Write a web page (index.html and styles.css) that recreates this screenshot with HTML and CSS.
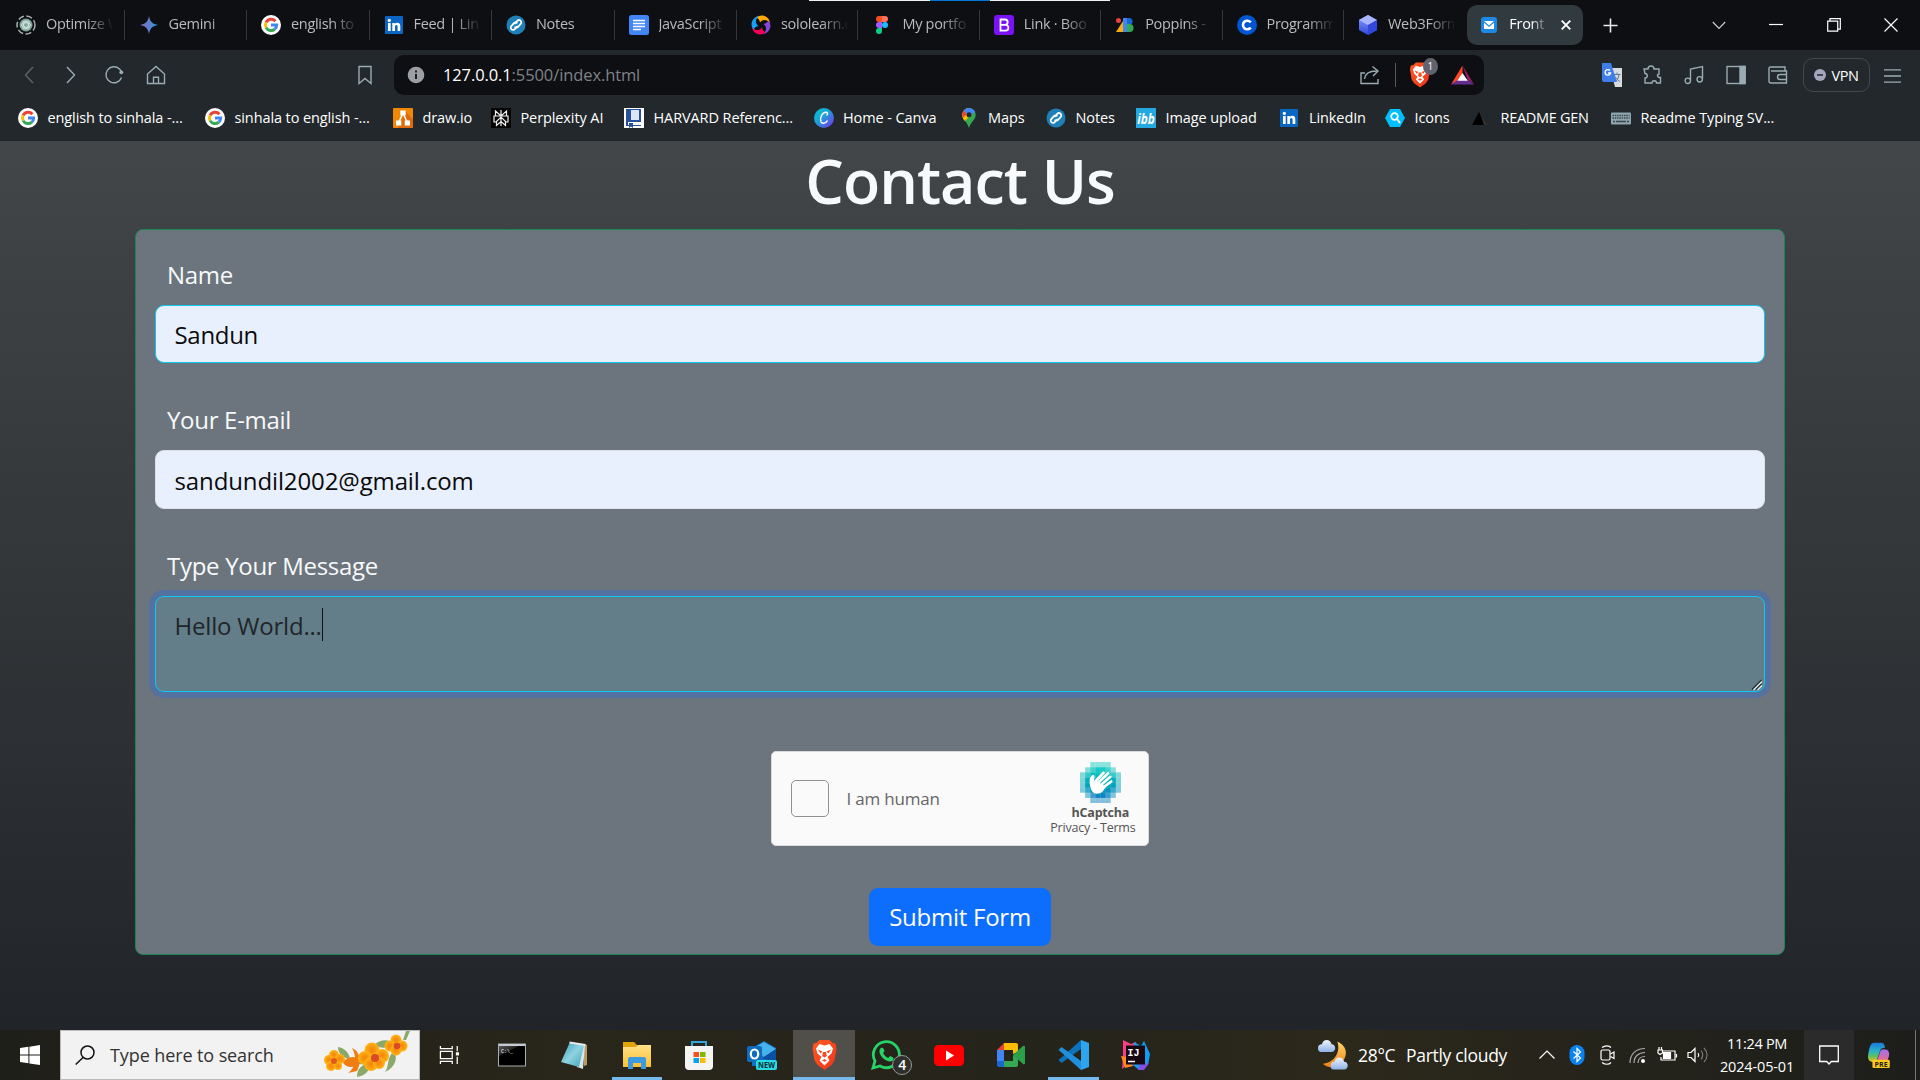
FILE: index.html
```html
<!DOCTYPE html>
<html lang="en">
<head>
<meta charset="utf-8">
<title>Front - Contact Us</title>
<link rel="stylesheet" href="styles.css">
</head>
<body>
<svg class="defs" aria-hidden="true">
  <defs>
    <linearGradient id="gem" x1="0" x2="1"><stop offset="0" stop-color="#9168c0"/><stop offset=".6" stop-color="#5684d1"/><stop offset="1" stop-color="#1ba1e3"/></linearGradient>
    <linearGradient id="cube" x1="0" y1="0" x2="0" y2="1"><stop offset="0" stop-color="#8fa0ff"/><stop offset="1" stop-color="#3048dc"/></linearGradient>
    <linearGradient id="canvaG" x1="0" y1="0" x2="1" y2="1"><stop offset="0" stop-color="#00c4cc"/><stop offset=".4" stop-color="#18a8d8"/><stop offset="1" stop-color="#7d2ae8"/></linearGradient>
    <linearGradient id="hc" x1="0" y1="0" x2="0" y2="1"><stop offset="0" stop-color="#1bd0c4"/><stop offset=".5" stop-color="#00aab9"/><stop offset="1" stop-color="#0f7fc4"/></linearGradient>
    <linearGradient id="braveG" x1="0" y1="0" x2="1" y2="1"><stop offset="0" stop-color="#ff5a1f"/><stop offset="1" stop-color="#f0321c"/></linearGradient>
    <linearGradient id="note" x1="0" y1="0" x2="1" y2="1"><stop offset="0" stop-color="#2f9ab0"/><stop offset=".5" stop-color="#8fd3e0"/><stop offset="1" stop-color="#3fa3b8"/></linearGradient>
    <linearGradient id="term" x1="0" y1="0" x2=".6" y2="1"><stop offset="0" stop-color="#666"/><stop offset=".4" stop-color="#222"/><stop offset=".41" stop-color="#000"/></linearGradient>
    <linearGradient id="folder" x1="0" y1="0" x2="0" y2="1"><stop offset="0" stop-color="#ffe08a"/><stop offset="1" stop-color="#fbc02f"/></linearGradient>
    <linearGradient id="cop" x1="0" y1="0" x2="0" y2="1"><stop offset="0" stop-color="#1a78dc"/><stop offset=".45" stop-color="#2ab5c5"/><stop offset=".7" stop-color="#5fc060"/><stop offset="1" stop-color="#f0c020"/></linearGradient>
    <linearGradient id="cop2" x1="0" y1="0" x2="0" y2="1"><stop offset="0" stop-color="#a070f0"/><stop offset="1" stop-color="#f06a8a"/></linearGradient>
    <linearGradient id="moon" x1="0" y1="0" x2="0" y2="1"><stop offset="0" stop-color="#ffd76a"/><stop offset="1" stop-color="#f07f14"/></linearGradient>
    <linearGradient id="cloud" x1="0" y1="0" x2="0" y2="1"><stop offset="0" stop-color="#eef4fd"/><stop offset="1" stop-color="#8fb2e8"/></linearGradient>
    <radialGradient id="petal"><stop offset=".2" stop-color="#f58a0c"/><stop offset="1" stop-color="#ffb515"/></radialGradient>
    <symbol id="google" viewBox="0 0 20 20"><circle cx="10" cy="10" r="10" fill="#fff"/><g fill="none" stroke-width="2.9"><path d="M14.4 6.2A5.6 5.6 0 0 0 5.1 7.4" stroke="#ea4335"/><path d="M5.1 7.4a5.6 5.6 0 0 0 0 5.2" stroke="#fbbc05"/><path d="M5.1 12.6a5.6 5.6 0 0 0 8.7 1.5" stroke="#34a853"/><path d="M10 10h5.7c0 1.800-.7 3.100-1.900 4.100" stroke="#4285f4"/></g></symbol>
    <symbol id="linkedin" viewBox="0 0 18 18"><rect width="18" height="18" rx="1" fill="#0a66c2"/><g fill="#fff"><circle cx="4.300" cy="4.400" r="1.600"/><path d="M3 7h2.700v8H3zM7.300 7h2.500v1.100c.5-.8 1.400-1.300 2.500-1.300 2.300 0 3 1.400 3 3.600V15h-2.700v-4.100c0-1.100-.2-1.900-1.200-1.900-1.100 0-1.400.8-1.400 1.900V15H7.300z"/></g></symbol>
    <symbol id="notes" viewBox="0 0 20 20"><circle cx="10" cy="10" r="9.500" fill="#1f80b8"/><g fill="none" stroke="#fff" stroke-width="1.700" stroke-linecap="round"><path d="M9 8.500l2.200-2.600a2.300 2.300 0 0 1 3.500 3l-2.600 3a2.300 2.300 0 0 1-3 .3"/><path d="M11 11.500l-2.200 2.600a2.300 2.300 0 0 1-3.500-3l2.600-3a2.300 2.300 0 0 1 3-.3"/></g></symbol>
    <symbol id="brave" viewBox="0 0 24 30"><path d="M7 0h10l3 3 3 .5 1 5-2 12-3 4.500-7 5-7-5L2 20.500l-2-12 1-5L4 3z" fill="url(#braveG)"/><path d="M12 5.500l5-1.500 3.500 4.500-1.500 5-4 3.500 2 3.500-5 5-5-5 2-3.500L5 13.500l-1.500-5L7 4z" fill="#fff"/><path d="M5.500 9.500l4.500 2-2 2zM18.500 9.500l-4.500 2 2 2zM10.500 12h3l.8 4-2.300 1.600L9.700 16zM9.500 20.500l2.500-1.600 2.500 1.600-2.500 1.300z" fill="#fb4a20"/></symbol>
    <path id="crescent" d="M5.500 2.800C9-1 17-.5 19.300 8C15.500 3.800 11.500 4.200 9 7.500C8.600 5 7.500 3.500 5.500 2.800z"/>
  </defs>
</svg>

<header class="browser">
  <div class="tabstrip">
    <span class="snap"><i></i></span>
    <div class="tab"><svg class="fav" viewBox="0 0 20 20"><circle cx="10" cy="10" r="9" fill="none" stroke="#a9b0b0" stroke-width="1.500" stroke-dasharray="6 2.500"/><circle cx="10" cy="10" r="6.500" fill="#7ba598"/><g fill="none" stroke="#e0ece8" stroke-width=".8"><ellipse cx="10" cy="10" rx="4.500" ry="2.300"/><ellipse cx="10" cy="10" rx="4.500" ry="2.300" transform="rotate(60 10 10)"/><ellipse cx="10" cy="10" rx="4.500" ry="2.300" transform="rotate(120 10 10)"/></g></svg><span>Optimize W</span></div>
    <div class="tab"><svg class="fav" viewBox="0 0 20 20"><path d="M10 1c.8 5.200 3.600 8.200 9 9-5.400.8-8.200 3.800-9 9-.8-5.200-3.600-8.200-9-9 5.400-.8 8.200-3.800 9-9z" fill="url(#gem)"/></svg><span>Gemini</span></div>
    <div class="tab"><svg class="fav"><use href="#google"/></svg><span>english to</span></div>
    <div class="tab"><svg class="fav sm"><use href="#linkedin"/></svg><span>Feed | Link</span></div>
    <div class="tab"><svg class="fav"><use href="#notes"/></svg><span>Notes</span></div>
    <div class="tab"><svg class="fav" viewBox="0 0 20 20"><rect width="20" height="20" rx="2.500" fill="#4285f4"/><path d="M4 5.500h12M4 8.500h12M4 11.500h12M4 14.500h8" stroke="#fff" stroke-width="1.700"/></svg><span>JavaScript</span></div>
    <div class="tab"><svg class="fav" viewBox="0 0 20 20"><use href="#crescent" fill="#ffa800"/><use href="#crescent" fill="#8248d8" transform="rotate(90 10 10)"/><use href="#crescent" fill="#f50057" transform="rotate(180 10 10)"/><use href="#crescent" fill="#1a9ff0" transform="rotate(270 10 10)"/></svg><span>sololearn.c</span></div>
    <div class="tab"><svg class="fav" viewBox="0 0 20 20"><path d="M10 1H7a3 3 0 0 0 0 6h3z" fill="#f24e1e"/><path d="M10 1h3a3 3 0 0 1 0 6h-3z" fill="#ff7262"/><path d="M10 7H7a3 3 0 0 0 0 6h3z" fill="#a259ff"/><circle cx="13" cy="10" r="3" fill="#1abcfe"/><path d="M10 13H7a3 3 0 1 0 3 3z" fill="#0acf83"/></svg><span>My portfo</span></div>
    <div class="tab"><svg class="fav" viewBox="0 0 20 20"><rect width="20" height="20" rx="3" fill="#7a12f5"/><path d="M6.500 4.500h4.500a2.600 2.600 0 0 1 0 5.300H6.500zM6.500 9.800h5a2.900 2.900 0 0 1 0 5.800h-5z" fill="none" stroke="#fff" stroke-width="1.800"/></svg><span>Link · Boo</span></div>
    <div class="tab"><svg class="fav" viewBox="0 0 20 20"><path d="M8 6v11H1z" fill="#fbad05"/><path d="M8 3h4v14H8z" fill="#4285f4"/><circle cx="3.500" cy="5.500" r="2.500" fill="#ea4335"/><path d="M12 3h2a3.500 3.500 0 0 1 0 7h-2z" fill="#1967d2"/><path d="M12 9h2.500a4 4 0 0 1 0 8H12z" fill="#34a853"/></svg><span>Poppins -</span></div>
    <div class="tab"><svg class="fav" viewBox="0 0 20 20"><circle cx="10" cy="10" r="10" fill="#0056d2"/><path d="M13.700 7.400a4.300 4.300 0 1 0 0 5.200" fill="none" stroke="#fff" stroke-width="2.600"/></svg><span>Programm</span></div>
    <div class="tab last"><svg class="fav" viewBox="0 0 20 20"><path d="M10 0l9 5v10l-9 5-9-5V5z" fill="url(#cube)"/><path d="M10 0l9 5-9 5-9-5z" fill="#a9b5ff"/><path d="M10 10l9-5v10l-9 5z" fill="#3247dc"/></svg><span>Web3Form</span></div>
    <div class="tab active"><svg class="fav sm" viewBox="0 0 18 18"><rect x="1" y="1" width="16" height="16" rx="3" fill="#1e88e5"/><path d="M4 5h10l-5 4.500zM4 6.800v6.200h10V6.800L9 11z" fill="#fff"/></svg><span>Front</span><svg class="x" viewBox="0 0 10 10"><path d="M.7.700l8.600 8.600M9.300.700L.700 9.300" stroke="#fff" stroke-width="1.900"/></svg></div>
    <svg class="plus" viewBox="0 0 16 16"><path d="M8 .5v15M.5 8h15" stroke="#e8eaeb" stroke-width="1.700"/></svg>
    <div class="winctl">
      <svg viewBox="0 0 14 14"><path d="M.8 4L7 10.500 13.200 4" fill="none" stroke="#ccc" stroke-width="1.200"/></svg>
      <svg viewBox="0 0 14 14"><path d="M0 6.500h14" stroke="#fff" stroke-width="1.200"/></svg>
      <svg viewBox="0 0 14 14"><path d="M.7 3.200h10v10H.7zM3 3V.7h10.300v10.400H11" fill="none" stroke="#fff" stroke-width="1.200"/></svg>
      <svg viewBox="0 0 14 14"><path d="M.5.500l13 13M13.500.500l-13 13" stroke="#fff" stroke-width="1.200"/></svg>
    </div>
  </div>

  <div class="toolbar">
    <div class="nav">
      <svg viewBox="0 0 20 20"><path d="M14 2l-7.500 8 7.500 8" stroke="#5d6468"/></svg>
      <svg viewBox="0 0 20 20"><path d="M6 2l7.500 8L6 18"/></svg>
      <svg viewBox="0 0 20 20"><path d="M17.500 12.500a8 8 0 1 1-2-8.500l2 2.500"/><circle cx="17.300" cy="7.300" r="1.900" fill="#9aacb3" stroke="none"/></svg>
      <svg viewBox="0 0 20 20"><path d="M1.500 9L10 1.500 18.500 9v9.500h-17zM7.500 18.500v-6.200h5v6.200"/></svg>
    </div>
    <svg class="bm" viewBox="0 0 20 20"><path d="M4 1.500h12v17l-6-5-6 5z"/></svg>
    <div class="address">
      <svg class="info" viewBox="0 0 18 18"><circle cx="9" cy="9" r="8.300" fill="#9c9fa3"/><path d="M9 8v5M9 4.500v2" stroke="#0e0f13" stroke-width="1.800"/></svg>
      <span class="url"><b>127.0.0.1</b>:5500/index.html</span>
      <svg class="share" viewBox="0 0 20 20"><path d="M5 8H1v10.500h17V14M4.500 14c.5-5.500 4-8 12-8M12.500 1.500L18 6l-5 5"/></svg>
      <i class="bar"></i>
      <span class="shield"><svg><use href="#brave"/></svg><em>1</em></span>
      <svg class="bat" viewBox="0 0 24 20"><path d="M12 0L0 20l12-6.500z" fill="#ff4724"/><path d="M12 0l12 20-7-6z" fill="#9e1f63"/><path d="M0 20h24l-7-5.500H8z" fill="#662d91"/><path d="M12 8l5.500 8h-11z" fill="#fff"/></svg>
    </div>
    <div class="ext">
      <svg viewBox="0 0 20 24" class="tr"><path d="M8 5h12v19h-7z" fill="#d8dcde"/><path d="M11.500 11.500h7M15 9.500v2M13 18.500c2.500-1 3.500-3.500 4-7M13.500 14c1 2 2.500 3.500 4.500 4.500" stroke="#61788d" stroke-width="1"/><path d="M0 0h9l6 19H2a2 2 0 0 1-2-2z" fill="#3f7ee8"/><path d="M8 7.500a2.800 2.800 0 1 0 .6 2.500H6" fill="none" stroke="#fff" stroke-width="1.300"/></svg>
      <svg viewBox="0 0 20 20"><path d="M2 4h4c0-4 6-4 6 0h5v5c-2.200 0-2.200 3.500 1.500 3.500V18h-4c0-3-4.500-3-4.500 0H3v-5c3 0 3-4.500 0-4.500z"/></svg>
      <svg viewBox="0 0 20 20"><path d="M6.500 15.500V4l12-2.500V14"/><circle cx="3.800" cy="15.800" r="2.700"/><circle cx="15.700" cy="14.300" r="2.700"/></svg>
      <svg viewBox="0 0 20 20"><rect x="1" y="1.500" width="18" height="17"/><path d="M14 1.500h5v17h-5z" fill="#9aacb3"/></svg>
      <svg viewBox="0 0 20 20"><path d="M17 6V2H2.500v0A1.500 1.500 0 0 0 1 4v12a2 2 0 0 0 2 2h15.500V6H3M18.500 9.500H12a2.500 2.500 0 0 0 0 5h6.500"/></svg>
      <span class="vpn"><svg viewBox="0 0 12 12"><circle cx="6" cy="6" r="6" fill="#a5a5bd"/><path d="M3 6h6" stroke="#22282b" stroke-width="1.500"/></svg>VPN</span>
      <svg class="menu" viewBox="0 0 18 18"><path d="M0 3h18M0 9.500h18M0 16h18"/></svg>
    </div>
  </div>

  <nav class="bookmarks">
    <a class="w187"><svg><use href="#google"/></svg>english to sinhala -...</a>
    <a class="w188"><svg><use href="#google"/></svg>sinhala to english -...</a>
    <a class="w98"><svg viewBox="0 0 20 20"><rect width="20" height="20" rx="1" fill="#f08705"/><path d="M12 3l8 8v9H5z" fill="#df6c0c"/><path d="M10 5l-4.500 10M10 5l4.500 10" stroke="#fff" stroke-width="1.500"/><path d="M7.300 2.500h5.400v5H7.300zM3 12.500h5.300v5H3zM11.700 12.500H17v5h-5.300z" fill="#fff"/></svg>draw.io</a>
    <a class="w133"><svg viewBox="0 0 20 20"><rect width="20" height="20" fill="#050505"/><path d="M10 2v16M4.500 3l5.500 5 5.500-5v5h-11zM4.500 8H3v6h2l5-5 5 5h2V8h-1.500M5.500 13v4.500l4.500-4 4.500 4V13" fill="none" stroke="#eee" stroke-width="1.200"/></svg>Perplexity AI</a>
    <a class="w190"><svg viewBox="0 0 20 20"><rect width="20" height="20" fill="#fff"/><path d="M2 1h15v13H4v3h13v1H2z" fill="#24509c"/><path d="M7 2h8v10H7z" fill="#dce6f4"/><path d="M5 15h4v5l-2-1.500L5 20z" fill="#24509c"/></svg>HARVARD Referenc...</a>
    <a class="w145"><svg viewBox="0 0 20 20"><circle cx="10" cy="10" r="10" fill="url(#canvaG)"/><path d="M12.500 7.500c2-1.500 1-3.500-1-3.200C7.500 5 5.500 11 7 13.800c1.500 2.600 5 1.500 6.500-1.300" fill="none" stroke="#fff" stroke-width="1.400"/></svg>Home - Canva</a>
    <a class="w87"><svg viewBox="0 0 20 20"><path d="M10 0a6.700 6.700 0 0 1 6.700 6.700C16.700 12 12 13 10 20 8 13 3.300 12 3.300 6.700A6.700 6.700 0 0 1 10 0z" fill="#34a853"/><path d="M3.300 6.700A6.700 6.700 0 0 1 10 0l5.500 3L6 13C4.500 11.500 3.300 9.500 3.300 6.700z" fill="#fbbc04"/><path d="M4.800 2.500L8 6 4 9.500C3 7 3.200 4.500 4.800 2.500z" fill="#ea4335"/><path d="M4.800 2.500A6.700 6.700 0 0 1 16 3.700L11 8 7 5z" fill="#4285f4"/><circle cx="10" cy="6.700" r="2.500" fill="#22282b"/></svg>Maps</a>
    <a class="w90"><svg><use href="#notes"/></svg>Notes</a>
    <a class="w143"><svg viewBox="0 0 20 20"><rect width="20" height="20" fill="#23a8e0"/><text x="1.200" y="15.500" class="ibb" textLength="17.500" lengthAdjust="spacingAndGlyphs">ibb</text></svg>Image upload</a>
    <a class="w106"><svg class="sm"><use href="#linkedin"/></svg>LinkedIn</a>
    <a class="w86"><svg viewBox="0 0 20 20"><path d="M5 1h10l5 9-5 9H5l-5-9z" fill="#00bfff"/><circle cx="9.500" cy="8.500" r="3.300" fill="none" stroke="#fff" stroke-width="1.800"/><path d="M12 11l3 4" stroke="#fff" stroke-width="2"/></svg>Icons</a>
    <a class="w140"><svg viewBox="0 0 20 20"><path d="M8 4l5.500 13H1z" fill="#000"/><path d="M10 8l6 9h-3z" fill="#333"/></svg>README GEN</a>
    <a><svg viewBox="0 0 20 20"><rect x="0" y="4.500" width="20" height="12" rx="1" fill="#90a4ae"/><path d="M1.500 7.500h17M1.500 10h17" stroke="#37474f" stroke-width="1.400" stroke-dasharray="1.500 .8"/><path d="M2 13.500h16" stroke="#37474f" stroke-width="1.400" stroke-dasharray="2 1 10 1 2 9"/></svg>Readme Typing SV...</a>
  </nav>
</header>

<main class="page">
  <h1>Contact Us</h1>
  <form class="card">
    <label>Name</label>
    <div class="field autofill focusline">Sandun</div>
    <label>Your E-mail</label>
    <div class="field autofill mail">sandundil2002@gmail.com</div>
    <label>Type Your Message</label>
    <div class="field area"><span class="typed">Hello World...</span><svg class="grip" viewBox="0 0 10 10"><path d="M0 9.500L9.500 0M4 9.500L9.500 4" stroke="#222b30" stroke-width="1.200"/><path d="M1.500 10L10 1.500M5.500 10L10 5.500" stroke="#dfe6e8" stroke-width="1.300"/></svg></div>
    <div class="captcha">
      <span class="box"></span>
      <span class="human">I am human</span>
      <div class="hc">
        <svg viewBox="0 0 40 40">
          <path opacity=".5" d="M10 0h20v5h5v5h5v20h-5v5h-5v5H10v-5H5v-5H0V10h5V5h5z" fill="url(#hc)"/>
          <path opacity=".6" d="M10 5h20v5h5v20h-5v5H10v-5H5V10h5z" fill="url(#hc)"/>
          <path d="M15 5h10v5h5v5h5v10h-5v5h-5v5H15v-5h-5v-5H5V15h5v-5h5z" fill="url(#hc)"/>
          <path d="M0 10h40M0 15h40M0 20h40M0 25h40M0 30h40M10 0v40M15 0v40M20 0v40M25 0v40M30 0v40M5 5v30M35 5v30M5 5h30M5 35h30" stroke="#fff" stroke-opacity=".14" stroke-width=".7"/>
          <path d="M10 24c-1-5-1-9 2-11 1.800-.8 2.700.8 2 3.500l-.6 3z" fill="#fff"/>
          <g stroke="#fff" stroke-linecap="round" stroke-width="2.600"><path d="M15 19l8-8.500M18 20l9.500-9M21 22l8.500-7.500M22.500 25l8-6"/></g>
          <path d="M10 22l5-4 10 6c-1.500 4-4 7-8.500 7-3.500 0-6.500-3-6.500-9z" fill="#fff"/>
        </svg>
        <b>hCaptcha</b>
        <span>Privacy - Terms</span>
      </div>
    </div>
    <button type="button">Submit Form</button>
  </form>
</main>

<footer class="taskbar">
  <div class="start"><svg viewBox="0 0 20 20"><path d="M0 3l8.400-1.200v7.700H0zM9.400 1.700L20 0v9.500H9.400zM0 10.500h8.400v7.700L0 17zM9.400 10.500H20V20L9.400 18.400z" fill="#fff"/></svg></div>
  <div class="search">
    <svg class="mag" viewBox="0 0 20 20"><circle cx="12.500" cy="7.500" r="6.500"/><path d="M8 12.500L.7 19.500"/></svg>
    <span>Type here to search</span>
    <svg class="flowers" viewBox="0 0 86 48">
      <g fill="#8aa86a"><path d="M14 16c6 1 11 5 12 12-7-1-12-5-12-12zM33 46c0-8 4-12 12-14 2 6-3 13-12 14zM50 14c6-6 14-6 20-2-4 6-14 6-20 2zM70 20c4 6 2 16-9 21 5-7 1-14 9-21zM82 0h4l-4 9h-3z"/><path d="M34 31l8 .5v2l-8-.5z"/></g>
      <g fill="url(#petal)"><circle cx="10" cy="24" r="5"/><circle cx="5" cy="29" r="5"/><circle cx="16" cy="28" r="5"/><circle cx="7" cy="35" r="5"/><circle cx="14" cy="35" r="4"/></g><circle cx="10" cy="30" r="3" fill="#dd5a20"/>
      <path d="M19 32c4-7 12-8 17-2-4 7-12 8-17 2zM28 17c8 3 10 14 5 23l-9 2c8-5 9-17 4-25z" fill="#ef7d12"/>
      <g fill="url(#petal)"><circle cx="48" cy="19" r="7.500"/><circle cx="41" cy="27" r="7"/><circle cx="58" cy="25" r="7"/><circle cx="47" cy="33" r="7"/><circle cx="55" cy="32" r="6"/></g><circle cx="51" cy="27" r="4" fill="#d94a28"/>
      <g fill="url(#petal)"><circle cx="72" cy="9" r="5.500"/><circle cx="66" cy="15" r="5.500"/><circle cx="78" cy="15" r="5.500"/><circle cx="72" cy="19" r="5.500"/></g><circle cx="73" cy="15" r="3.300" fill="#d94a28"/>
    </svg>
  </div>
  <div class="apps">
    <div><svg class="i22" viewBox="0 0 22 22"><g fill="none" stroke="#fff" stroke-width="1.400"><path d="M1 1v3h13V1M1 21v-3h13v3M1 7h13v8H1zM19.500 1v6M19.500 13v8"/></g><path d="M18 8h3.500v3.500H18z" fill="#fff"/></svg></div>
    <div><svg class="i28" viewBox="0 0 28 28"><rect x=".5" y="3" width="27" height="22" fill="url(#term)" stroke="#a8b0b5"/><path d="M1 3h26v2H1z" fill="#c3cbd0"/><text x="3" y="11.500" class="prompt">C:\_</text></svg></div>
    <div><svg class="i28" viewBox="0 0 28 28"><path d="M24 3l3 1v20l-3 1z" fill="#b89a68"/><path d="M10 1l15 3-2 24-6-2z" fill="#d8e6ea"/><path d="M10 1l14 3-5 22L1 21z" fill="url(#note)"/><path d="M9.500 1.500l16 2.500" stroke="#e8e8e8" stroke-width="2"/></svg></div>
    <div class="run"><svg class="i28" viewBox="0 0 28 28"><path d="M0 1h11l3 3h13v8H0z" fill="#e3a208"/><path d="M0 6h13l2-2h13v22H0z" fill="url(#folder)"/><path d="M5 28V18a2 2 0 0 1 2-2h14a2 2 0 0 1 2 2v10h-5v-6h-8v6z" fill="#3c9be0"/></svg></div>
    <div><svg class="i30" viewBox="0 0 30 30"><path d="M8 7V2h14v5" fill="none" stroke="#31a5e0" stroke-width="2"/><path d="M1 6h28v20a4 4 0 0 1-4 4H5a4 4 0 0 1-4-4z" fill="#f4f4f4"/><path d="M9.500 12H15v5H9.500z" fill="#f25022"/><path d="M16 12h5.500v5H16z" fill="#7fba00"/><path d="M9.500 18H15v5H9.500z" fill="#00a4ef"/><path d="M16 18h5.500v5H16z" fill="#ffb900"/></svg></div>
    <div><svg class="i30" viewBox="0 0 30 30"><path d="M5 8L17 1l12 7v18H5z" fill="#1070c8"/><path d="M10 6l7-4 12 7-12 9z" fill="#45b2ee"/><path d="M29 9v14L15 18z" fill="#0a50a0"/><rect y="6" width="15" height="16" rx="2" fill="#0f6cbd"/><ellipse cx="7.500" cy="14" rx="3.700" ry="4.500" fill="none" stroke="#fff" stroke-width="2.200"/><rect x="9" y="20" width="21" height="10" rx="2" fill="#28dce2"/><text x="11" y="28" class="newtag" textLength="17" lengthAdjust="spacingAndGlyphs">NEW</text></svg></div>
    <div class="run current"><svg class="brv"><use href="#brave"/></svg></div>
    <div class="badge"><svg class="i30" viewBox="0 0 30 30"><path d="M2 28l2-7A13 13 0 1 1 9 26z" fill="none" stroke="#25d366" stroke-width="2.800"/><path d="M10 8c2-1 2.500 0 3.500 3l-1.300 2c1.200 2.500 2.500 3.800 5 5l1.800-2c3.500 1.500 4 2 3.500 3.500C20 25 8 18 8.500 11c.2-1.500.5-2.200 1.500-3z" fill="#25d366"/></svg><em>4</em></div>
    <div><svg class="i30" viewBox="0 0 30 30"><rect y="5" width="30" height="21" rx="4.500" fill="#f00"/><path d="M12 10.500l8 5-8 5z" fill="#fff"/></svg></div>
    <div><svg class="i28" viewBox="0 0 28 28"><path d="M0 9l7-7v7z" fill="#ea4335"/><path d="M7 2h12a2 2 0 0 1 2 2v7l-5 2V9H7z" fill="#fbbc04"/><path d="M0 9h7v11H0z" fill="#4285f4"/><path d="M0 20h7v6H2a2 2 0 0 1-2-2z" fill="#1967d2"/><path d="M7 20h9v-6l5 3v7a2 2 0 0 1-2 2H7z" fill="#34a853"/><path d="M16 14l10-9c1-.6 2 0 2 1v16c0 1-1 1.600-2 1z" fill="#2aa149"/></svg></div>
    <div class="run"><svg class="i30" viewBox="0 0 30 30"><path d="M22 0l8 3v24l-8 3z" fill="#2fa4ee"/><path d="M22 0L2 18l-2.500 2 3 3L22 9z" fill="#0d72ba"/><path d="M22 30L2 12l-2.500-2 3-3L22 21z" fill="#2090dc"/></svg></div>
    <div><svg class="i30" viewBox="0 0 30 30"><path d="M2 0l8 4 5-2 3 24-12-1-5 4 1-12z" fill="#fc3f80"/><path d="M0 16l7 1 5 9-8 2z" fill="#ff8a1f"/><path d="M13 2l7 4 3-5 6 13-2 11-9 5-7-6z" fill="#159df5"/><path d="M18 25l10-2-5 7h-6z" fill="#8050e8"/><path d="M5 5.500h19v19H5z" fill="#170812"/><path d="M7 21.500h7" stroke="#fff" stroke-width="1.500"/><text x="6.500" y="15.500" class="ij">IJ</text></svg></div>
  </div>
  <div class="weather"><svg viewBox="0 0 32 32"><path d="M20 2c9 4 12 13 5 21-6 7-15 7-20 2 10-1 19-10 15-23z" fill="url(#moon)"/><path d="M4 13a4 4 0 0 1 0-8C5-1 13-1 14 5c5 0 5 8 0 8z" fill="url(#cloud)"/><path d="M17 31a4 4 0 0 1 0-8c1-6 9-6 10 0 5 0 5 8 0 8z" fill="url(#cloud)"/></svg><span class="deg">28°C</span><span class="sky">Partly cloudy</span></div>
  <div class="tray">
    <svg viewBox="0 0 20 20"><path d="M2.500 13.500L10 6l7.500 7.500"/></svg>
    <svg viewBox="0 0 20 20"><rect x="2.500" width="15" height="20" rx="7.500" fill="#0a82f0" stroke="none"/><path d="M6.500 6.500l7 6.500-3.500 3.500v-13L13.500 7l-7 6.500"/></svg>
    <svg viewBox="0 0 20 20"><rect x="4" y="5" width="9" height="10" rx="1.500"/><path d="M13.500 9l3.500-2v6.500l-3.500-2M5 2.500c3-2.300 7-2.300 9 0M5 17.500c3 2.300 7 2.300 9 0"/></svg>
    <svg viewBox="0 0 20 20"><g stroke="#aaa"><path d="M3 18C3 9 9 3.500 18 3.500M7 18c0-6.500 4.500-10.500 11-10.500M11 18c0-4 3-6.500 7-6.500"/></g><circle cx="16" cy="16" r="2" fill="#fff" stroke="none"/></svg>
    <svg viewBox="0 0 20 20"><path d="M5 6h13v9H4v-3M19.500 9v3.500M2 2v3M4.500 2v3M1 5h4.500v3L3 9.500 1 8z"/><path d="M6.500 7.500h7v6h-7z" fill="#fff"/></svg>
    <svg viewBox="0 0 20 20"><path d="M1 7.500h3L8 3.500v13l-4-4H1z"/><path d="M11 8c1 1.300 1 2.700 0 4"/><path d="M14 5.500c2.300 3 2.300 6 0 9M17 3c4 4 4 10 0 14" stroke="#777"/></svg>
  </div>
  <div class="clock"><span>11:24 PM</span><span class="date">2024-05-01</span></div>
  <div class="action"><svg viewBox="0 0 20 20"><path d="M.7 1h18.600v15.500h-7L10 19l-2.300-2.500h-7z" fill="none" stroke="#fff" stroke-width="1.300"/></svg></div>
  <div class="copilot"><svg viewBox="0 0 26 30"><path d="M8 1h8c3 0 4 2 4.500 5.500-3.500 0-5 1-6 4.500l-3 9c-.8 2-2 3-4.500 3C1 23 0 18 1.500 12 3 6 3.500 1 8 1z" fill="url(#cop)"/><path d="M19 8.500c6 0 7 4 6 8l-2 6H11l3.500-10c.8-3 2-4 4.500-4z" fill="url(#cop2)"/><rect x="6" y="20.500" width="20" height="9.500" rx="1.500" fill="#ffc81e"/><text x="8.500" y="28.300" class="pre" textLength="15" lengthAdjust="spacingAndGlyphs">PRE</text></svg></div>
</footer>
</body>
</html>
```
FILE: styles.css
```css
* { box-sizing: border-box; }
body {
  margin: 0;
  width: 1920px;
  height: 1080px;
  overflow: hidden;
  display: flex;
  flex-direction: column;
  font-family: "Open Sans", "Noto Sans", sans-serif;
  color: #fff;
}
svg { flex: none; display: block; overflow: visible; }
.defs { position: absolute; width: 0; height: 0; }
em { font-style: normal; }

/* browser chrome */
.browser { height: 141px; background: #22282b; flex: none; }
.tabstrip {
  position: relative;
  height: 50px;
  background: #0e0f13;
  display: flex;
  align-items: center;
  padding-left: 2px;
}
.snap { position: absolute; left: 809px; top: 0; width: 301px; height: 1px; background: #f2f2f2; display: flex; justify-content: center; }
.snap i { width: 60px; background: #0078d7; }
.tab {
  flex: none;
  width: 122.500px;
  height: 30px;
  border-right: 1px solid #34363a;
  display: flex;
  align-items: center;
  padding-left: 14px;
  font-size: 14.500px;
  letter-spacing: -.3px;
  color: #b9bbbd;
}
.tab:nth-of-type(n+7) { width: 121.400px; }
.tab .fav { width: 20px; height: 20px; margin-right: 10px; }
.tab .fav.sm, .bookmarks svg.sm { width: 18px; height: 18px; margin-left: 1px; margin-right: 11px; }
.tab span {
  width: 66px;
  line-height: 20px;
  padding-bottom: 2px;
  overflow: hidden;
  white-space: nowrap;
  -webkit-mask-image: linear-gradient(90deg, #000 40px, transparent 68px);
  mask-image: linear-gradient(90deg, #000 40px, transparent 68px);
}
.tab.last { border: 0; }
.tab.tab.active {
  width: 116px;
  height: 40px;
  border: 0;
  border-radius: 10px;
  background: #313a3f;
  color: #fff;
  padding-left: 12px;
  margin-left: 2px;
}
.tab.active span { width: 38px; -webkit-mask-image: linear-gradient(90deg, #000 22px, transparent 40px); mask-image: linear-gradient(90deg, #000 22px, transparent 40px); }
.tab.active .x { width: 10px; height: 10px; margin-left: 14px; }
.plus { width: 15px; height: 15px; margin-left: 20px; }
.winctl { margin-left: auto; display: flex; gap: 43.500px; padding-right: 22px; }
.winctl svg { width: 14px; height: 14px; }

.toolbar { height: 50px; display: flex; align-items: center; }
.toolbar svg { width: 20px; height: 20px; fill: none; stroke: #9aacb3; stroke-width: 1.400; }
.toolbar use { stroke: none; }
.nav { display: flex; gap: 22.300px; padding-left: 19px; }
.bm { margin-left: 189px; }
.address {
  margin-left: 19px;
  width: 1090px;
  height: 40px;
  border-radius: 10px;
  background: #0e0f13;
  display: flex;
  align-items: center;
}
.toolbar .info { width: 18px; height: 18px; margin: 0 18px 0 13px; stroke: none; }
.url { flex: 1; padding-bottom: 2px; font-size: 16.500px; letter-spacing: -.1px; color: #7e8387; }
.url b { font-weight: 400; color: #fff; }
.bar { width: 1px; height: 24px; background: #55595d; margin: 0 14px 0 15px; }
.shield { position: relative; margin-right: 21px; }
.toolbar .shield svg { width: 20px; height: 26px; stroke: none; }
.shield em {
  position: absolute;
  left: 13px;
  top: -4px;
  width: 15px;
  height: 17px;
  border-radius: 50%;
  background: #62636f;
  font-size: 10px;
  line-height: 17px;
  text-align: center;
}
.toolbar .bat { width: 23px; height: 20px; stroke: none; margin-right: 10px; }
.ext { margin-left: auto; display: flex; align-items: center; gap: 22px; padding-right: 19px; }
.toolbar .tr { height: 24px; stroke: none; margin-right: -2px; }
.vpn {
  width: 67px;
  height: 34px;
  border: 1px solid #42494d;
  border-radius: 10px;
  display: flex;
  align-items: center;
  justify-content: center;
  gap: 5px;
  margin: 0 -8px 0 -7px;
  font-size: 14.500px;
  letter-spacing: -.4px;
}
.toolbar .vpn svg { width: 12px; height: 12px; stroke: none; }
.toolbar .menu { width: 17px; height: 17px; }

.bookmarks { height: 36px; display: flex; align-items: center; padding: 0 0 1px 18px; font-size: 14.500px; letter-spacing: -.1px; }
.bookmarks a { flex: none; display: flex; align-items: center; white-space: nowrap; line-height: 20px; }
.bookmarks svg { width: 20px; height: 20px; margin-right: 9.500px; }
.w187 { width: 187px; }
.w188 { width: 188px; }
.w98 { width: 98px; }
.w133 { width: 133px; }
.w190 { width: 189.500px; }
.w145 { width: 145px; }
.w87 { width: 87.500px; }
.w90 { width: 90px; }
.w143 { width: 143px; }
.w106 { width: 106px; }
.w86 { width: 86px; }
.w140 { width: 140px; letter-spacing: -.3px; }
.ibb { font: italic 700 13.500px "Open Sans", sans-serif; fill: #fff; letter-spacing: 0; }

/* page content */
.page {
  height: 889px;
  flex: none;
  background: linear-gradient(#434648, #212529);
  display: flex;
  flex-direction: column;
  align-items: center;
}
h1 { margin: 0; height: 88px; line-height: 80px; font-size: 61px; font-weight: 600; letter-spacing: -1px; color: #f8f9fa; }
.card {
  width: 1650px;
  height: 726px;
  border: 1px solid #198754;
  border-radius: 8px;
  background: #6c757d;
  padding: 27px 19px 0;
  display: flex;
  flex-direction: column;
}
label { padding-left: 12px; height: 48px; line-height: 36px; font-size: 24px; letter-spacing: -.3px; color: #f8f9fa; }
.field {
  height: 58px;
  flex: none;
  border: 1px solid #dee2e6;
  border-radius: 9px;
  padding: 0 18.500px;
  font-size: 24px;
  letter-spacing: -.3px;
  line-height: 57px;
  color: #0b0b0b;
  margin-bottom: 39px;
}
.autofill { background: #e8f0fe; }
.focusline { border-color: #0dcaf0; }
.mail { height: 59px; line-height: 60px; letter-spacing: -.12px; }
.area {
  position: relative;
  height: 96px;
  background: #637e88;
  border-color: #0dcaf0;
  box-shadow: 0 0 0 6px #53729f;
  color: #212529;
  margin-bottom: 59px;
  letter-spacing: -.2px;
}
.typed { display: inline-block; height: 33px; line-height: 35px; margin-top: 11px; border-right: 1px solid #111; vertical-align: top; }
.grip { position: absolute; right: 2px; bottom: 1px; width: 10px; height: 10px; }
.captcha {
  align-self: center;
  width: 378px;
  height: 95px;
  flex: none;
  border: 1px solid #dadada;
  border-radius: 5px;
  background: #fafafa;
  color: #555;
  display: flex;
  align-items: center;
  padding: 0 12px 0 19px;
  margin: 0 1px 42px 0;
}
.box { width: 38px; height: 37px; border: 1px solid #919191; border-radius: 5px; }
.human { flex: 1; padding-left: 18px; font-size: 17px; letter-spacing: -.2px; color: #666; }
.hc { display: flex; flex-direction: column; align-items: center; font-size: 12.500px; line-height: 15px; letter-spacing: -.2px; }
.hc svg { width: 41px; height: 41px; margin: 0 0 2px 15px; }
.hc b { margin-left: 15px; font-weight: 700; }
button {
  align-self: center;
  width: 182px;
  height: 58px;
  border: 0;
  border-radius: 9px;
  background: #0d6efd;
  color: #fff;
  font: 400 24px "Open Sans", sans-serif;
  letter-spacing: -.25px;
  padding: 0 0 1px;
  white-space: nowrap;
}

/* taskbar */
.taskbar { height: 50px; flex: none; display: flex; align-items: center; background: linear-gradient(90deg, #1f1f19, #29261b 30%, #25241b 55%, #2c291b 70%, #24231b 85%, #1d1e1b); }
.start { width: 60px; display: flex; justify-content: center; }
.start svg { width: 20px; height: 20px; }
.search {
  width: 360px;
  height: 50px;
  background: #f2f2f2;
  border: 1px solid #bbb;
  display: flex;
  align-items: center;
  color: #333;
  font-size: 18px;
  letter-spacing: -.1px;
}
.mag { width: 20px; height: 20px; margin: 0 15px 0 14px; fill: none; stroke: #111; stroke-width: 1.500; }
.search span { flex: 1; white-space: nowrap; }
.flowers { width: 86px; height: 48px; margin-right: 9px; }
.apps { display: flex; margin-left: -1.500px; height: 50px; }
.apps > div { position: relative; width: 62.400px; height: 50px; display: flex; align-items: center; justify-content: center; }
.i22 { width: 21px; height: 20px; }
.i28 { width: 28px; height: 28px; }
.i30 { width: 30px; height: 30px; }
.brv { width: 25px; height: 30px; }
.run::after { content: ""; position: absolute; left: 6px; right: 6px; bottom: 0; height: 3px; background: #76b9ed; }
.current { background: #504f49; }
.current::after { left: 0; right: 0; }
.badge em {
  position: absolute;
  left: 37px;
  bottom: 5px;
  width: 20px;
  height: 20px;
  border: 1px solid #999;
  border-radius: 50%;
  background: #2e2e2a;
  font: 600 14px/18px "Open Sans", sans-serif;
  text-align: center;
}
.prompt { font: 5px "Liberation Mono", monospace; fill: #fff; }
.newtag { font: 700 8px "Open Sans", sans-serif; fill: #0a2a3a; }
.ij { font: 700 10px "Liberation Mono", monospace; fill: #fff; }
.pre { font: 700 8px "Open Sans", sans-serif; fill: #222; }
.weather { margin-left: auto; display: flex; align-items: center; font-size: 17.500px; letter-spacing: -.3px; white-space: nowrap; }
.weather svg { width: 31px; height: 32px; margin-right: 9px; }
.deg { width: 48px; }
.sky { width: 131px; }
.tray { display: flex; gap: 10px; }
.tray svg { width: 20px; height: 20px; fill: none; stroke: #fff; stroke-width: 1.200; }
.clock { width: 97px; padding-left: 3px; display: flex; flex-direction: column; align-items: center; font-size: 14.500px; line-height: 23px; letter-spacing: -.3px; }
.date { letter-spacing: -.15px; }
.action { width: 50px; height: 50px; background: #2b2b2c; display: flex; align-items: center; justify-content: center; }
.action svg { width: 20px; height: 20px; }
.copilot { width: 62px; height: 50px; margin-right: 4px; padding-left: 12px; border-right: 1px solid #777; display: flex; align-items: center; }
.copilot svg { width: 25px; height: 26px; }
```
